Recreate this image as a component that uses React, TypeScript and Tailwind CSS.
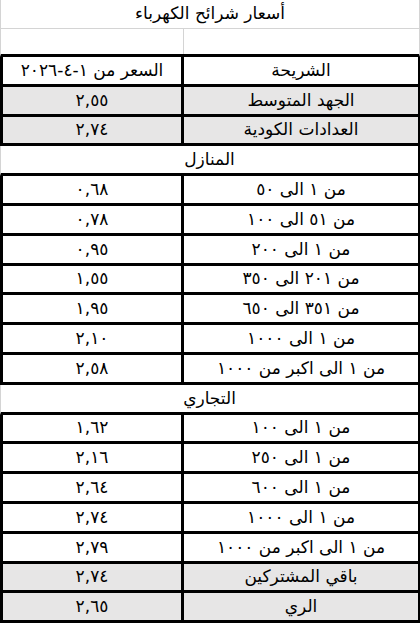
import React from 'react'

type Row =
  | { kind: 'data'; label: string; price: string; shaded?: boolean }
  | { kind: 'section'; label: string }

const rows: Row[] = [
  { kind: 'data', label: 'الجهد المتوسط', price: '٢,٥٥', shaded: true },
  { kind: 'data', label: 'العدادات الكودية', price: '٢,٧٤', shaded: true },
  { kind: 'section', label: 'المنازل' },
  { kind: 'data', label: 'من ١ الى  ٥٠', price: '٠,٦٨' },
  { kind: 'data', label: 'من ٥١ الى ١٠٠', price: '٠,٧٨' },
  { kind: 'data', label: 'من ١ الى ٢٠٠', price: '٠,٩٥' },
  { kind: 'data', label: 'من ٢٠١ الى ٣٥٠', price: '١,٥٥' },
  { kind: 'data', label: 'من ٣٥١ الى ٦٥٠', price: '١,٩٥' },
  { kind: 'data', label: 'من ١ الى ١٠٠٠', price: '٢,١٠' },
  { kind: 'data', label: 'من ١ الى اكبر من ١٠٠٠', price: '٢,٥٨' },
  { kind: 'section', label: 'التجاري' },
  { kind: 'data', label: 'من ١ الى ١٠٠', price: '١,٦٢' },
  { kind: 'data', label: 'من ١ الى ٢٥٠', price: '٢,١٦' },
  { kind: 'data', label: 'من ١ الى ٦٠٠', price: '٢,٦٤' },
  { kind: 'data', label: 'من ١ الى ١٠٠٠', price: '٢,٧٤' },
  { kind: 'data', label: 'من ١ الى اكبر من ١٠٠٠', price: '٢,٧٩' },
  { kind: 'data', label: 'باقي المشتركين', price: '٢,٧٤', shaded: true },
  { kind: 'data', label: 'الري', price: '٢,٦٥', shaded: true },
]

function DataRow({ label, price, shaded }: { label: string; price: string; shaded?: boolean }) {
  return (
    <div
      className={`grid grid-cols-[181px_1fr] h-[29.8px] border-l-[3px] border-r-2 border-b-[3px] border-black ${
        shaded ? 'bg-[#e7e6e6]' : 'bg-white'
      }`}
    >
      <div className="flex items-center justify-center border-r-[3px] border-black" dir="rtl">
        {price}
      </div>
      <div className="flex items-center justify-center" dir="rtl">
        {label}
      </div>
    </div>
  )
}

export default function App() {
  return (
    <div
      className="w-[420px] h-[628px] bg-white text-black text-[17px] leading-none overflow-hidden"
      style={{ fontFamily: '"DejaVu Sans", "Noto Sans", sans-serif' }}
    >
      <div className="h-[28.5px] flex items-center justify-center border-l border-r border-b border-[#d4d4d4]" dir="rtl">
        أسعار شرائح الكهرباء
      </div>
      <div className="h-[28.5px] grid grid-cols-[183px_1fr] border-l border-r border-[#d4d4d4] border-b-[3px] border-b-black">
        <div className="border-r border-[#d4d4d4]" />
        <div />
      </div>
      <DataRow label="الشريحة" price="السعر من ١-٤-٢٠٢٦" />
      {rows.map((r, i) =>
        r.kind === 'section' ? (
          <div
            key={i}
            className="h-[29.8px] flex items-center justify-center border-l border-l-[#d4d4d4] border-r-2 border-r-black border-b-[3px] border-b-black"
            dir="rtl"
          >
            {r.label}
          </div>
        ) : (
          <DataRow key={i} label={r.label} price={r.price} shaded={r.shaded} />
        )
      )}
    </div>
  )
}
